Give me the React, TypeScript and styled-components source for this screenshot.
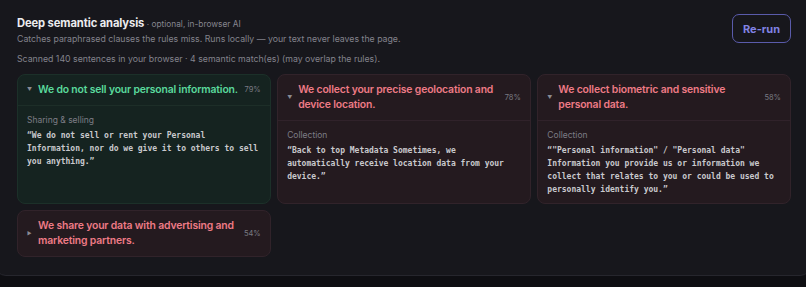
import React from "react";
import styled, { createGlobalStyle } from "styled-components";

const Global = createGlobalStyle`
  html, body { margin: 0; padding: 0; background: #0e0e12; overflow: hidden; }
  body { font-family: Inter, "Noto Sans", sans-serif; -webkit-font-smoothing: antialiased; }
  * { box-sizing: border-box; }
`;

const Panel = styled.section`
  width: 818px;
  margin: -12px -6px 0;
  padding: 26px 20px 18px 22px;
  background: #17171c;
  border: 1px solid #26262d;
  border-radius: 12px;
`;

const Head = styled.div`
  display: flex;
  align-items: flex-start;
  justify-content: space-between;
`;

const Intro = styled.div`
  display: flex;
  flex-direction: column;
`;

const Title = styled.h2`
  margin: 0;
  font-size: 11.2px;
  font-weight: 700;
  color: #ececef;
  line-height: 16px;
  letter-spacing: -0.1px;
`;

const Aside = styled.span`
  font-size: 8.3px;
  font-weight: 400;
  color: #86868f;
  letter-spacing: 0;
`;

const Desc = styled.p`
  margin: 0;
  font-size: 8.75px;
  line-height: 14px;
  color: #83838c;
`;

const Scan = styled(Desc)`
  margin-top: 6px;
`;

const Rerun = styled.button`
  margin-top: -1px;
  width: 59px;
  height: 29px;
  border: 1.5px solid #5a5bab;
  border-radius: 7px;
  background: transparent;
  color: #8283e4;
  font-family: Inter, sans-serif;
  font-weight: 700;
  font-size: 11px;
  padding: 0;
`;

const Grid = styled.div`
  margin-top: 8px;
  display: grid;
  grid-template-columns: repeat(3, 1fr);
  column-gap: 6.5px;
  row-gap: 6px;
`;

type Tone = "good" | "bad";

const Card = styled.div<{ $tone: Tone }>`
  border-radius: 8px;
  background: ${(p) => (p.$tone === "good" ? "#152320" : "#241a1f")};
  border: 1px solid ${(p) => (p.$tone === "good" ? "#1c3029" : "#31232a")};
  display: flex;
  flex-direction: column;
`;

const CardHead = styled.div<{ $open: boolean; $tone: Tone }>`
  display: flex;
  align-items: center;
  padding: 7px 9px 8px 9px;
  border-bottom: ${(p) =>
    p.$open ? `1px solid ${p.$tone === "good" ? "#1d2e28" : "#30222a"}` : "none"};
`;

const Caret = styled.span`
  width: 6px;
  margin-right: 5px;
  flex: 0 0 auto;
  color: #8a8a92;
  font-size: 5px;
  line-height: 1;
`;

const Claim = styled.span<{ $tone: Tone }>`
  flex: 1;
  min-width: 0;
  font-size: 10.4px;
  font-weight: 600;
  line-height: 15px;
  letter-spacing: -0.15px;
  color: ${(p) => (p.$tone === "good" ? "#5ad99c" : "#ee7b86")};
`;

const Pct = styled.span`
  flex: 0 0 auto;
  margin-left: 3px;
  font-size: 7.5px;
  color: #7a7a83;
`;

const CardBody = styled.div`
  padding: 8px 9px 7px;
`;

const Cat = styled.div`
  font-size: 8.5px;
  color: #7d7d86;
  line-height: 13px;
  margin-bottom: 2px;
`;

const Quote = styled.div`
  font-family: "DejaVu Sans Mono", "Liberation Mono", monospace;
  font-size: 8px;
  line-height: 13px;
  color: #c9c9cd;
  font-weight: 700;
`;

type Item = {
  tone: Tone;
  claim: string;
  pct: string;
  open: boolean;
  cat?: string;
  quote?: string;
};

const items: Item[] = [
  {
    tone: "good",
    claim: "We do not sell your personal information.",
    pct: "79%",
    open: true,
    cat: "Sharing & selling",
    quote:
      "\u201cWe do not sell or rent your Personal Information, nor do we give it to others to sell you anything.\u201d",
  },
  {
    tone: "bad",
    claim: "We collect your precise geolocation and device location.",
    pct: "78%",
    open: true,
    cat: "Collection",
    quote:
      "\u201cBack to top Metadata Sometimes, we automatically receive location data from your device.\u201d",
  },
  {
    tone: "bad",
    claim: "We collect biometric and sensitive personal data.",
    pct: "58%",
    open: true,
    cat: "Collection",
    quote:
      "\u201c\"Personal information\" / \"Personal data\" Information you provide us or information we collect that relates to you or could be used to personally identify you.\u201d",
  },
  {
    tone: "bad",
    claim: "We share your data with advertising and marketing partners.",
    pct: "54%",
    open: false,
  },
];

export default function App() {
  return (
    <>
      <Global />
      <Panel>
        <Head>
          <Intro>
            <Title>
              Deep semantic analysis <Aside>· optional, in-browser AI</Aside>
            </Title>
            <Desc>
              Catches paraphrased clauses the rules miss. Runs locally — your text never leaves the page.
            </Desc>
            <Scan>
              Scanned 140 sentences in your browser · 4 semantic match(es) (may overlap the rules).
            </Scan>
          </Intro>
          <Rerun>Re-run</Rerun>
        </Head>
        <Grid>
          {items.map((it, i) => (
            <Card key={i} $tone={it.tone}>
              <CardHead $open={it.open} $tone={it.tone}>
                <Caret>{it.open ? "▼" : "▶"}</Caret>
                <Claim $tone={it.tone}>{it.claim}</Claim>
                <Pct>{it.pct}</Pct>
              </CardHead>
              {it.open && (
                <CardBody>
                  <Cat>{it.cat}</Cat>
                  <Quote>{it.quote}</Quote>
                </CardBody>
              )}
            </Card>
          ))}
        </Grid>
      </Panel>
    </>
  );
}
